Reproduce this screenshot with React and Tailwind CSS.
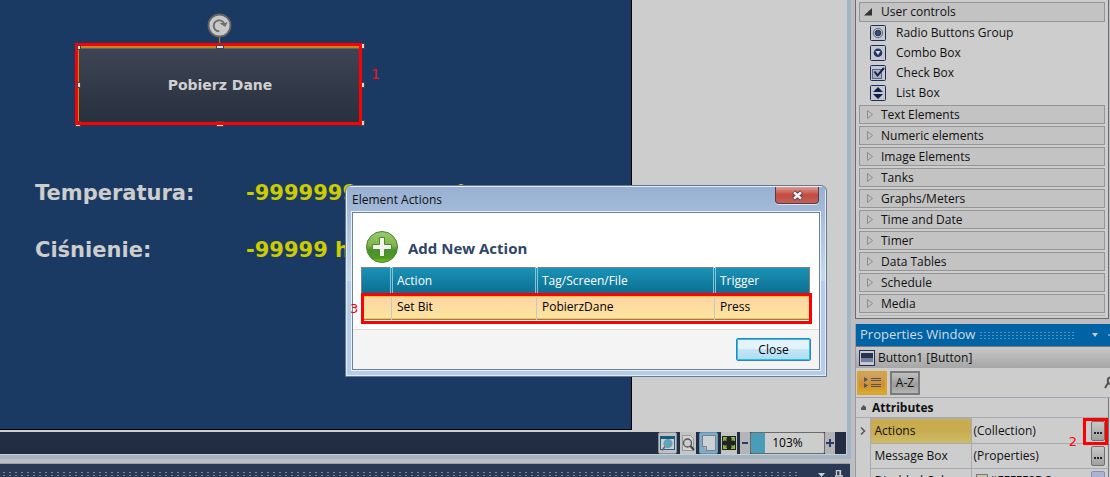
import React from "react";

const GROUPS = [
  "Text Elements",
  "Numeric elements",
  "Image Elements",
  "Tanks",
  "Graphs/Meters",
  "Time and Date",
  "Timer",
  "Data Tables",
  "Schedule",
  "Media",
];

const IconFrame = ({ children }) => (
  <svg width="16" height="16" viewBox="0 0 16 16" className="shrink-0">
    <rect x="0.5" y="0.5" width="15" height="15" rx="1" fill="#c6c8cd" stroke="#1c2f5c" />
    {children}
  </svg>
);

const CONTROLS = [
  {
    name: "Radio Buttons Group",
    icon: (
      <IconFrame>
        <circle cx="8" cy="8" r="4.7" fill="#bfc0c4" stroke="#6a6c72" />
        <circle cx="8" cy="8" r="2.8" fill="#3a4a78" stroke="#22335f" />
      </IconFrame>
    ),
  },
  {
    name: "Combo Box",
    icon: (
      <IconFrame>
        <circle cx="8" cy="7.8" r="4.3" fill="#1f3768" />
        <path d="M5.3 6h5.4L8 10z" fill="#d2d4da" />
      </IconFrame>
    ),
  },
  {
    name: "Check Box",
    icon: (
      <IconFrame>
        <rect x="2.5" y="4.5" width="9" height="9" fill="#a9b0c4" stroke="#5b6786" />
        <path d="M4.5 6.5l3 4L14 3" fill="none" stroke="#14254d" strokeWidth="2" />
      </IconFrame>
    ),
  },
  {
    name: "List Box",
    icon: (
      <IconFrame>
        <path d="M8 2l5 5H3zM3 9h10l-5 5z" fill="#0b1f50" />
      </IconFrame>
    ),
  },
];

const Handle = ({ className }) => (
  <span className={`absolute box-border border border-[#444] bg-[#d8d8d8] ${className}`} />
);

function DesignCanvas() {
  return (
    <div className="relative min-h-0 flex-1 overflow-hidden bg-[#cdcdcd]">
      <div className="absolute top-0 bottom-[2px] left-0 w-[632px] border-r border-b border-black bg-[#1a3a64] font-['DejaVu_Sans',sans-serif] font-bold">
        <svg className="absolute top-[13px] left-[207px]" width="25" height="34" viewBox="0 0 25 34">
          <path d="M12.500 24v9" stroke="#b88a28" />
          <circle cx="12.500" cy="12.500" r="11" fill="#c9c9c9" stroke="#666" strokeWidth="1.800" />
          <path d="M12.300 18.200a5.400 5.400 0 1 1 5-7" fill="none" stroke="#6e6e6e" strokeWidth="2" />
          <path d="M13.500 10.500h6.200v-1.200l-1.500 4z" fill="#6e6e6e" stroke="#6e6e6e" />
        </svg>
        <button className="absolute top-[46px] left-[78px] h-[78px] w-[283px] border-t-2 border-l border-[#c8871a] bg-linear-to-b from-[#3e4453] to-[#27303e] pb-[2px] text-sm text-[#d0d0d0] shadow-[inset_0_1px_0_#5d6475]">
          Pobierz Dane
        </button>
        <Handle className="top-[121px] left-[75px] h-[6px] w-[6px]" />
        <Handle className="top-[121px] left-[216px] h-[6px] w-[8px]" />
        <Handle className="top-[43px] left-[359px] h-[6px] w-[6px]" />
        <Handle className="top-[82px] left-[359px] h-[6px] w-[6px]" />
        <Handle className="top-[120px] left-[359px] h-[6px] w-[6px]" />
        <div className="absolute top-[43px] left-[75px] h-[82px] w-[287px] border-[3px] border-[#fe0000]" />
        <Handle className="top-[45px] left-[77px] h-[5px] w-[4px]" />
        <Handle className="top-[45px] left-[216px] h-[4px] w-[8px]" />
        <Handle className="top-[82px] left-[77px] h-[6px] w-[4px]" />
        <span className="absolute top-[64px] left-[371px] text-sm font-normal text-[#f0141e]">1</span>
        <div className="absolute top-[178px] left-[35px] grid grid-cols-[211px_auto] gap-y-[27px] text-[21px] leading-[30px] whitespace-nowrap">
          <span className="text-[#cdcdcd]">Temperatura:</span>
          <span className="flex w-[220px] justify-between text-[#cccc00]">
            <span>-9999999</span>
            <span>°</span>
          </span>
          <span className="text-[#cdcdcd]">Ciśnienie:</span>
          <span className="text-[#cccc00]">-99999 h</span>
        </div>
      </div>
    </div>
  );
}

function StatusBar() {
  return (
    <div className="flex h-[22px] shrink-0 items-stretch justify-end bg-[#222d44] pr-[11px]">
      <button aria-label="Preview window" className="w-[19px] rounded-xs border border-[#8a8f96] bg-[#bfc3c6]">
        <svg width="17" height="20" viewBox="0 0 17 20">
          <rect x="1.500" y="3.500" width="14" height="13" fill="#c6d0d6" stroke="#27627f" />
          <rect x="1" y="3" width="15" height="3" fill="#155d80" />
          <circle cx="9" cy="10.500" r="4" fill="#55a8c4" stroke="#8b9499" strokeWidth="1.200" />
          <path d="M6 13.500l-3 4" stroke="#666" strokeWidth="1.600" />
        </svg>
      </button>
      <button aria-label="Zoom page" className="ml-[3px] w-[16px] bg-[#c4c4c4]">
        <svg width="16" height="22" viewBox="0 0 16 22">
          <path d="M2.500 3.500h8l3 3v12h-11z" fill="#d2d2d2" stroke="#999" />
          <circle cx="7.500" cy="11" r="4" fill="#c8cdd0" stroke="#555" strokeWidth="1.300" />
          <path d="M10.500 14l3.500 4" stroke="#444" strokeWidth="2" />
        </svg>
      </button>
      <button aria-label="Page" className="ml-[3px] w-[19px] rounded-xs border border-[#5f97b8] bg-[#81abc5]">
        <svg width="17" height="20" viewBox="0 0 17 20">
          <path d="M2.500 2.500h13v15h-9l-4-4z" fill="#cdd1d4" stroke="#75828c" />
          <path d="M2.500 13.500h4v4" fill="#b5b9bd" stroke="#75828c" />
        </svg>
      </button>
      <button aria-label="Fit to screen" className="ml-[3px] w-[16px] bg-[#c4c4c4]">
        <svg width="16" height="22" viewBox="0 0 16 22">
          <rect x="1" y="4" width="14" height="14" fill="#222" />
          <path
            d="M2 5h4v1.500H4.500L6 8 5 9 3.500 7.500V9H2zM14 5h-4v1.500h1.500L10 8l1 1 1.500-1.500V9H14zM2 17h4v-1.500H4.500L6 14l-1-1-1.500 1.500V13H2zM14 17h-4v-1.500h1.500L10 14l1-1 1.500 1.500V13H14z"
            fill="#86b93a"
          />
        </svg>
      </button>
      <button aria-label="Zoom out" className="ml-[3px] flex w-[10px] items-center justify-center bg-[#b4b4b8]">
        <svg width="6" height="6"><path d="M0 3h6" stroke="#2a3c64" strokeWidth="2" /></svg>
      </button>
      <input
        aria-label="Zoom level"
        defaultValue="103%"
        className="w-[75px] rounded-xs border border-[#6b6b6b] bg-[#cdcdcd] bg-linear-to-r from-[#4a9db8] from-[14px] to-transparent to-[14px] text-center text-xs text-black"
      />
      <button aria-label="Zoom in" className="flex w-[10px] items-center justify-center bg-[#b4b4b8]">
        <svg width="8" height="8"><path d="M0 4h8M4 0v8" stroke="#2a3c64" strokeWidth="2" /></svg>
      </button>
    </div>
  );
}

function DockedPanel() {
  return (
    <div className="flex h-[14px] shrink-0 items-end border-t border-[#9a9fac] bg-[#2a3854]">
      <div className="ml-px h-[6px] flex-1 bg-[radial-gradient(circle,#7d879b_0.9px,transparent_1px)] bg-size-[6px_3px]" />
      <div className="flex w-[49px] items-end gap-[10px] pl-[17px]">
        <svg width="7" height="4"><path d="M0 0h7L3.500 4z" fill="#cdcdcd" /></svg>
        <svg width="8" height="7"><path d="M1.500 6V.5h4V6M5 .5V6M0 6h8" fill="none" stroke="#cdcdcd" strokeWidth="1.300" /></svg>
      </div>
    </div>
  );
}

function Toolbox() {
  return (
    <div className="mr-px shrink-0 border-x border-b border-[#6b6b6b] bg-[#cdcdcd] pt-[2px] pr-[3px] pb-[2px] pl-[3px]">
      <button aria-expanded="true" className="flex h-[20px] w-full items-center border border-[#959595] bg-[#c3c3c3]">
        <svg width="21" height="10" viewBox="0 0 21 10"><path d="M4 8.500h8V1z" fill="#333" /></svg>
        User controls
      </button>
      <ul className="pt-px pb-[2px]">
        {CONTROLS.map((c) => (
          <li key={c.name} className="flex h-[20px] items-center gap-[10px] pl-[11px]">
            {c.icon}
            {c.name}
          </li>
        ))}
      </ul>
      <div className="flex flex-col gap-[2px]">
        {GROUPS.map((g) => (
          <button key={g} aria-expanded="false" className="flex h-[19px] items-center border border-[#959595] bg-[#c3c3c3]">
            <svg width="21" height="12" viewBox="0 0 21 12">
              <path d="M7.500 1.500v8l5-4z" fill="none" stroke="#8b8b8b" />
            </svg>
            {g}
          </button>
        ))}
        <div className="h-px bg-[#b2b2b2]" />
      </div>
    </div>
  );
}

const Ellipsis = ({ label }) => (
  <button
    aria-label={label}
    className="flex h-[20px] w-[14px] items-end justify-center rounded-xs border border-[#707070] bg-linear-to-b from-[#c8c8c8] to-[#a0a0a0] pb-[6px]"
  >
    <svg width="8" height="2"><path d="M0 1h2M3 1h2M6 1h2" stroke="#222" strokeWidth="2" /></svg>
  </button>
);

function PropertiesWindow() {
  return (
    <section className="mt-[5px] min-h-0 flex-1 overflow-hidden border-l border-[#9a9aa4] bg-[#cdcdcd]">
      <header className="flex h-[22px] items-center bg-[#0063a5] pl-[4px] text-[13px] text-[#d5dce2]">
        <h2>Properties Window</h2>
        <div className="ml-[4px] h-[9px] w-[97px] bg-[radial-gradient(circle,#4d94c5_0.9px,transparent_1px)] bg-size-[4px_3px]" />
        <svg className="ml-[16px]" width="6" height="4"><path d="M0 0h6L3 4z" fill="#cdcdcd" /></svg>
        <svg className="ml-auto" width="2" height="8"><path d="M0 4h2" stroke="#cdcdcd" /></svg>
      </header>
      <div className="flex h-[22px] items-center gap-[3px] border-t border-[#7a7a7a] bg-linear-to-b from-[#c8c8c8] to-[#a6a6a6] pl-[3px]">
        <svg width="16" height="16" viewBox="0 0 16 16">
          <rect x="0.500" y="0.500" width="15" height="15" fill="#c9c9cc" stroke="#1c2f5c" />
          <rect x="2" y="3" width="12" height="5" fill="#26364f" />
          <rect x="2" y="8" width="12" height="4" fill="#6d7c9f" />
        </svg>
        Button1 [Button]
      </div>
      <div className="flex h-[30px] items-center border-b border-[#a3a3b0] pl-px">
        <button aria-label="Categorized" className="h-[24px] w-[30px] border-2 border-[#d9a62a] bg-linear-to-b from-[#cfa56a] via-[#cf8f30] via-60% to-[#d9aa30]">
          <svg width="26" height="20" viewBox="0 0 26 20">
            <path d="M5 4l4 2.500L5 9zM5 10l4 2.500L5 15z" fill="#555" />
            <path d="M12 5.500h10M12 7.500h10M12 11.500h10M12 13.500h10" stroke="#555" />
          </svg>
        </button>
        <button className="ml-[3px] h-[24px] w-[30px] border-2 border-[#7a7a7a] bg-linear-to-b from-[#c0c0c0] via-[#9b9b9b] via-60% to-[#b4b4b4] text-center">
          A-Z
        </button>
        <svg className="ml-auto" width="6" height="14" viewBox="0 0 6 14">
          <path d="M6 1.500C3 2 3 7 6 8M4 7L1 12" fill="none" stroke="#555" strokeWidth="2" />
        </svg>
      </div>
      <div className="mr-px border-r border-[#777]">
        <div className="flex h-[20px] items-center gap-[6px] border-b border-[#a9a9b4] pl-[5px] font-bold">
          <svg width="5" height="5"><path d="M0 5h5V2L2.500 0 0 3z" fill="#555" /></svg>
          Attributes
        </div>
        <table className="w-full table-fixed border-collapse">
          <colgroup>
            <col className="w-[14px]" />
            <col className="w-[101px]" />
            <col />
          </colgroup>
          <tbody>
            <tr className="h-[25px]">
              <td className="pl-[4px]">
                <svg width="6" height="8" viewBox="0 0 6 8"><path d="M1 0.500L4.500 4 1 7.500" fill="none" stroke="#555" strokeWidth="1.500" /></svg>
              </td>
              <th scope="row" className="border border-[#a9a9b4] bg-linear-to-b from-[#c9ab4c] via-[#c9ac50] to-[#cdbd68] pl-[4px] text-left font-normal">Actions</th>
              <td className="border-b border-[#a9a9b4] pr-[3px] pl-[2px]">
                <div className="flex items-center justify-between">(Collection)<Ellipsis label="Edit actions" /></div>
              </td>
            </tr>
            <tr className="h-[25px]">
              <td />
              <th scope="row" className="border border-[#a9a9b4] pl-[4px] text-left font-normal">Message Box</th>
              <td className="border-b border-[#a9a9b4] pr-[3px] pl-[2px]">
                <div className="flex items-center justify-between">(Properties)<Ellipsis label="Edit message box" /></div>
              </td>
            </tr>
            <tr className="h-[25px]">
              <td />
              <th scope="row" className="border border-[#a9a9b4] pl-[4px] text-left font-normal">Disabled Color</th>
              <td className="border-b border-[#a9a9b4] pr-[3px] pl-[4px]">
                <div className="flex items-center gap-[2px]">
                  <span className="h-[14px] w-[12px] border border-[#777] bg-[#cdc5a8]" />
                  #FFFFF8DC
                  <button aria-label="Choose color" className="ml-auto flex h-[20px] w-[14px] items-center justify-center rounded-xs border border-[#8490b4] bg-[#a9b4d2]">
                    <svg width="8" height="5"><path d="M0 0l4 4 4-4" fill="none" stroke="#2b3c6b" strokeWidth="2" /></svg>
                  </button>
                </div>
              </td>
            </tr>
          </tbody>
        </table>
      </div>
    </section>
  );
}

function ActionsDialog() {
  return (
    <div
      role="dialog"
      aria-labelledby="dialog-title"
      className="absolute top-[185px] left-[345px] flex h-[192px] w-[482px] flex-col rounded-t-md border border-[#66788c] bg-linear-to-b from-[#98b0d2] via-[#c6daee] via-50% to-[#b5cdec] to-50% px-[6px] pb-[6px] shadow-[inset_0_0_0_1px_#e4edf7]"
    >
      <div className="-mx-[5px] mt-px flex h-[25px] shrink-0 items-center justify-between bg-linear-to-b from-[#98b0d2] to-[#a3bbd9] px-[5px]">
        <h1 id="dialog-title">Element Actions</h1>
        <button aria-label="Close dialog" className="mr-px flex h-[17px] w-[44px] items-center justify-center self-start rounded-b-sm border border-t-0 border-[#5a3a46] bg-linear-to-b from-[#dd9a94] via-[#c4473c] via-50% to-[#c0625a] shadow-[0_1px_0_#dce8f5]">
          <svg width="13" height="11" viewBox="0 0 13 11">
            <path d="M2.500 2l8 7M10.500 2l-8 7" stroke="#5a4a5a" strokeWidth="4.600" />
            <path d="M3 2.400l7 6.200M10 2.400L3 8.600" stroke="#f4f4f4" strokeWidth="2.600" />
          </svg>
        </button>
      </div>
      <div className="flex min-h-0 flex-1 flex-col border border-[#6d8098] bg-[#f4f4f4] shadow-[0_0_0_1px_#eaf2fa]">
        <div className="border-b border-[#dcdcdc] bg-white pt-[17px] pr-[9px] pb-[9px] pl-[8px]">
          <div className="flex h-[37px] items-start gap-[10px] pl-[5px]">
            <button aria-labelledby="add-action">
              <svg width="32" height="34" viewBox="0 0 32 34">
                <defs>
                  <linearGradient id="green" x1="0" y1="0" x2="0" y2="1">
                    <stop offset="0" stopColor="#9cc873" />
                    <stop offset="0.450" stopColor="#7db74a" />
                    <stop offset="0.600" stopColor="#4b9030" />
                    <stop offset="0.850" stopColor="#4f9a22" />
                    <stop offset="1" stopColor="#7ccc1c" />
                  </linearGradient>
                </defs>
                <circle cx="16" cy="17" r="15.500" fill="url(#green)" stroke="#4a8030" />
                <path d="M13.500 7.500h5v7h7v5h-7v7h-5v-7h-7v-5h7z" fill="#f2f2f0" stroke="#4d8a2b" />
              </svg>
            </button>
            <span id="add-action" className="pt-[7px] text-[15px] leading-[22px] font-bold text-[#2f4568]">Add New Action</span>
          </div>
          <table className="w-full table-fixed border-collapse border border-[#808080]">
            <colgroup>
              <col className="w-[30px]" />
              <col className="w-[145px]" />
              <col className="w-[178px]" />
              <col />
            </colgroup>
            <thead>
              <tr className="h-[27px] bg-linear-to-b from-[#1a93b6] to-[#0b6c90] text-white">
                <td />
                <th className="border-x-3 border-double border-[#86c4d6] pl-[4px] text-left font-normal">Action</th>
                <th className="border-x-3 border-double border-[#86c4d6] pl-[4px] text-left font-normal">Tag/Screen/File</th>
                <th className="border-l-3 border-double border-[#86c4d6] pl-[4px] text-left font-normal">Trigger</th>
              </tr>
            </thead>
            <tbody>
              <tr className="h-[25px] bg-linear-to-b from-[#fdd2a4] to-[#fde79e] text-black shadow-[inset_0_2px_0_#fdc32e,inset_0_-2px_0_#fdc32e]">
                <td className="border-r border-[#c6c6c6]" />
                <td className="border-r border-[#c6c6c6] pl-[5px]">Set Bit</td>
                <td className="border-r border-[#c6c6c6] pl-[5px]">PobierzDane</td>
                <td className="pl-[5px]">Press</td>
              </tr>
            </tbody>
          </table>
        </div>
        <div className="flex flex-1 items-start justify-end pt-[8px] pr-[8px]">
          <button className="h-[23px] w-[75px] rounded-xs border border-[#3c7fb1] bg-linear-to-b from-[#e4f3fb] from-45% via-[#c4e5f6] via-50% to-[#addcf4] text-center text-black shadow-[inset_0_0_0_1px_#1fc4f4]">
            Close
          </button>
        </div>
      </div>
      <div className="absolute top-[107px] left-[15px] h-[31px] w-[451px] border-[3px] border-[#fe0000]" />
      <span className="absolute top-[114px] left-[4px] font-['DejaVu_Sans',sans-serif] text-[13px] text-[#fe0000]">3</span>
    </div>
  );
}

export default function App() {
  return (
    <main className="relative flex h-screen overflow-hidden bg-[#bebdc2] font-['Open_Sans','Noto_Sans',sans-serif] text-xs text-[#111]">
      <div className="flex min-w-0 flex-1 flex-col">
        <div className="flex min-h-0 flex-1 flex-col border-r-4 border-b-4 border-[#a2b5c3]">
          <DesignCanvas />
          <div className="flex flex-col border-b border-[#c8cdd2] bg-[#cdcdcd] pr-px">
            <StatusBar />
          </div>
        </div>
        <div className="mt-[4px] mr-px">
          <DockedPanel />
        </div>
      </div>
      <aside className="ml-[4px] flex w-[255px] shrink-0 flex-col">
        <Toolbox />
        <PropertiesWindow />
      </aside>
      <ActionsDialog />
      <div className="absolute top-[418px] right-[2px] h-[27px] w-[25px] border-[3px] border-[#fe0000]" />
      <span className="absolute top-[433px] right-[33px] font-['DejaVu_Sans',sans-serif] text-[13px] text-[#fe0000]">2</span>
    </main>
  );
}
